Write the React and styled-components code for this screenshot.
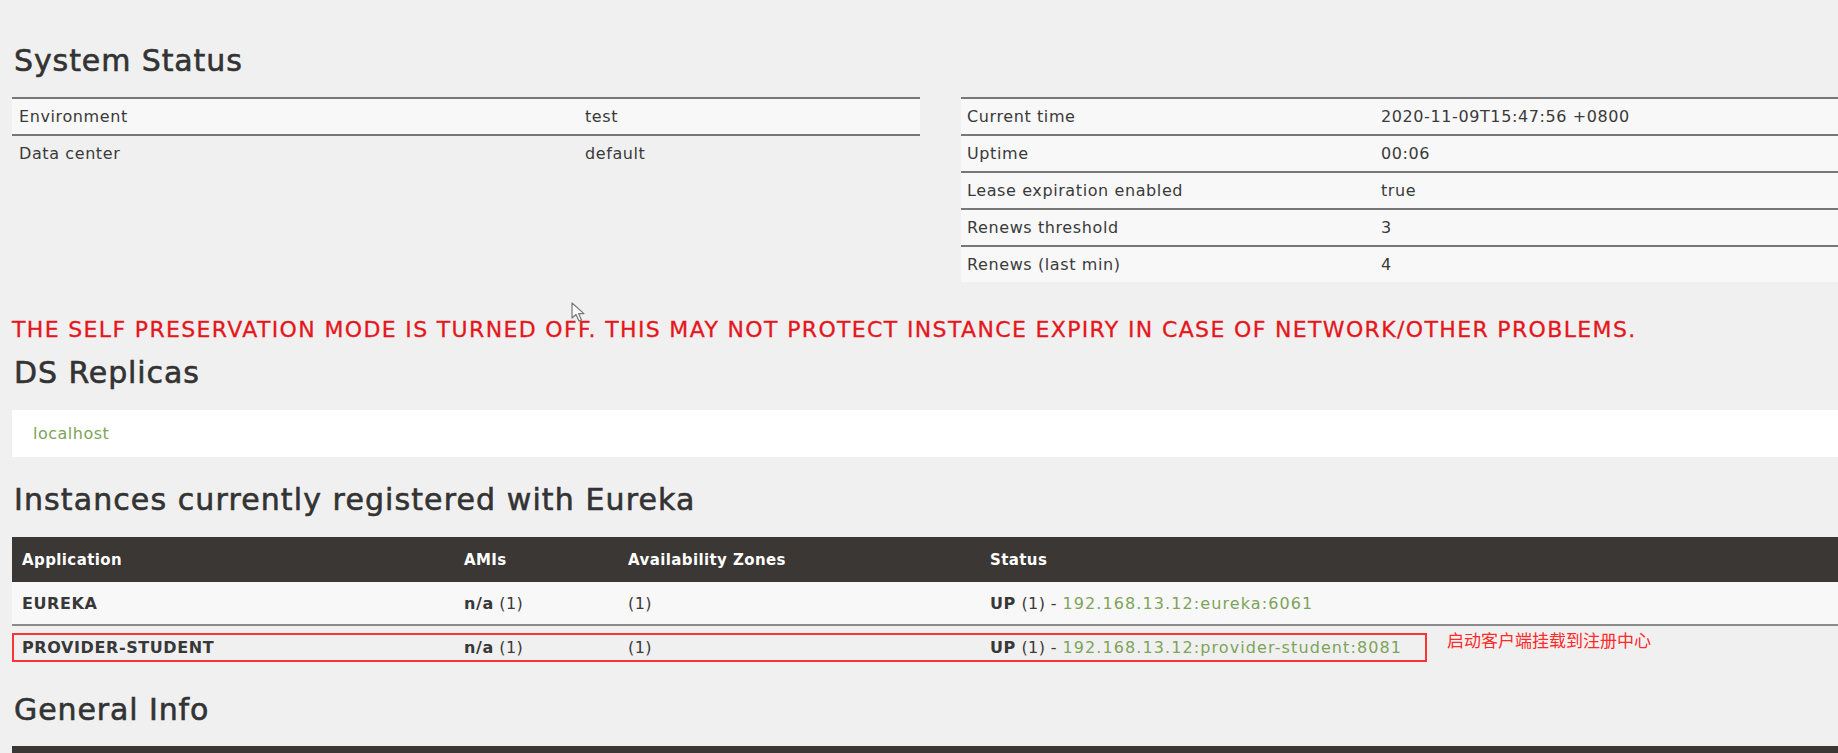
import React from 'react'
import styled, { createGlobalStyle } from 'styled-components'

const GlobalStyle = createGlobalStyle`
  html, body {
    margin: 0;
    padding: 0;
    background: #f0f0f0;
    overflow: hidden;
  }
  body {
    font-family: "DejaVu Sans", "Noto Sans CJK SC", sans-serif;
    color: #333;
  }
`

const Page = styled.div`
  position: relative;
  width: 1881px;
  padding: 43px 12px 0;
  box-sizing: border-box;
`

const Heading = styled.h2`
  margin: ${({ $mt }) => $mt || 0}px 0 0;
  padding-left: 2px;
  font-size: 30px;
  line-height: 36px;
  font-weight: normal;
  letter-spacing: ${({ $ls }) => $ls ?? 0.9}px;
  color: #333;
  -webkit-text-stroke: 0.6px #333;
`

const StatusGrid = styled.div`
  display: grid;
  grid-template-columns: 908px 908px;
  column-gap: 41px;
  align-items: start;
  margin-top: 18px;
`

const InfoRow = styled.div`
  display: grid;
  grid-template-columns: ${({ $label }) => $label}px 1fr;
  height: 37px;
  box-sizing: border-box;
  border-top: 2px solid #777;
  background: ${({ $shaded }) => ($shaded ? '#f8f8f8' : 'transparent')};
  font-size: 16px;
  letter-spacing: 0.6px;
  line-height: 35px;
  color: #3a3a3a;
`

const InfoCell = styled.div`
  padding-left: ${({ $pad }) => $pad}px;
  white-space: nowrap;
`

const Warning = styled.div`
  margin-top: 36px;
  font-size: 22px;
  line-height: 24px;
  color: #e5171c;
  white-space: nowrap;
  letter-spacing: 1.35px;
  -webkit-text-stroke: 0.3px #e5171c;
`

const ReplicaBox = styled.div`
  margin-top: 19px;
  height: 47px;
  background: #fff;
  display: flex;
  align-items: center;
  padding-left: 21px;
`

const Green = styled.span`
  color: #7ea35a;
  font-size: 16px;
  letter-spacing: ${({ $wide }) => ($wide ? 1.1 : 0.5)}px;
`

const Instances = styled.div`
  position: relative;
  margin-top: 19px;
`

const InstRow = styled.div`
  display: grid;
  grid-template-columns: 442px 164px 362px 1fr;
  height: ${({ $h }) => $h}px;
  align-items: center;
  box-sizing: border-box;
  background: ${({ $bg }) => $bg};
  color: ${({ $head }) => ($head ? '#fff' : '#3a3a3a')};
  font-size: ${({ $head }) => ($head ? 15 : 16)}px;
  font-weight: ${({ $head }) => ($head ? 'bold' : 'normal')};
  letter-spacing: 0.4px;
  border-top: ${({ $line }) => ($line ? '2px solid #8a8a8a' : 'none')};
`

const InstCell = styled.div`
  padding-left: 10px;
  white-space: nowrap;
`

const Strong = styled.b`
  letter-spacing: 0.6px;
  color: #383838;
`

const Highlight = styled.div`
  position: absolute;
  left: 0;
  top: 96px;
  width: 1415px;
  height: 29px;
  box-sizing: border-box;
  border: 2.5px solid #ff3535;
`

const Note = styled.div`
  position: absolute;
  left: 1435px;
  top: 93px;
  font-family: "Noto Sans CJK SC", sans-serif;
  font-size: 17px;
  line-height: 20px;
  color: #ff2a2a;
  white-space: nowrap;
`

const DarkBar = styled.div`
  margin-top: 18px;
  height: 40px;
  background: #3b3734;
`

const Cursor = styled.svg`
  position: absolute;
  left: 571px;
  top: 302px;
`

const leftRows = [
  ['Environment', 'test'],
  ['Data center', 'default'],
]

const rightRows = [
  ['Current time', '2020-11-09T15:47:56 +0800'],
  ['Uptime', '00:06'],
  ['Lease expiration enabled', 'true'],
  ['Renews threshold', '3'],
  ['Renews (last min)', '4'],
]

const InfoTable = ({ rows, label, pad, allShaded }) => (
  <div>
    {rows.map(([k, v], i) => (
      <InfoRow key={k} $label={label} $shaded={allShaded || i % 2 === 0}>
        <InfoCell $pad={pad}>{k}</InfoCell>
        <InfoCell $pad={pad}>{v}</InfoCell>
      </InfoRow>
    ))}
  </div>
)

const apps = [
  { name: 'EUREKA', url: '192.168.13.12:eureka:6061' },
  { name: 'PROVIDER-STUDENT', url: '192.168.13.12:provider-student:8081' },
]

export default function App() {
  return (
    <>
      <GlobalStyle />
      <Page>
        <Heading>System Status</Heading>
        <StatusGrid>
          <InfoTable rows={leftRows} label={566} pad={7} />
          <InfoTable rows={rightRows} label={414} pad={6} allShaded />
        </StatusGrid>

        <Warning>
          THE SELF PRESERVATION MODE IS TURNED OFF. THIS MAY NOT PROTECT INSTANCE EXPIRY IN CASE OF NETWORK/OTHER PROBLEMS.
        </Warning>

        <Heading $mt={13}>DS Replicas</Heading>
        <ReplicaBox>
          <Green>localhost</Green>
        </ReplicaBox>

        <Heading $mt={25} $ls={1.1}>Instances currently registered with Eureka</Heading>
        <Instances>
          <InstRow $head $h={45} $bg="#3b3734">
            <InstCell>Application</InstCell>
            <InstCell>AMIs</InstCell>
            <InstCell>Availability Zones</InstCell>
            <InstCell>Status</InstCell>
          </InstRow>
          {apps.map((a, i) => (
            <InstRow key={a.name} $h={i === 0 ? 42 : 44} $line={i > 0} $bg={i === 0 ? '#f8f8f8' : 'transparent'}>
              <InstCell><Strong>{a.name}</Strong></InstCell>
              <InstCell><Strong>n/a</Strong> (1)</InstCell>
              <InstCell>(1)</InstCell>
              <InstCell>
                <Strong>UP</Strong> (1) - <Green $wide>{a.url}</Green>
              </InstCell>
            </InstRow>
          ))}
          <Highlight />
          <Note>启动客户端挂载到注册中心</Note>
        </Instances>

        <Heading $mt={24}>General Info</Heading>
        <DarkBar />

        <Cursor width="18" height="21" viewBox="0 0 18 21">
          <path d="M1 1 L1 16 L5 12.5 L8 19 L10.5 18 L7.6 11.6 L13 11.6 Z" fill="#fafafa" stroke="#777" strokeWidth="1.2" strokeLinejoin="round" />
        </Cursor>
      </Page>
    </>
  )
}
